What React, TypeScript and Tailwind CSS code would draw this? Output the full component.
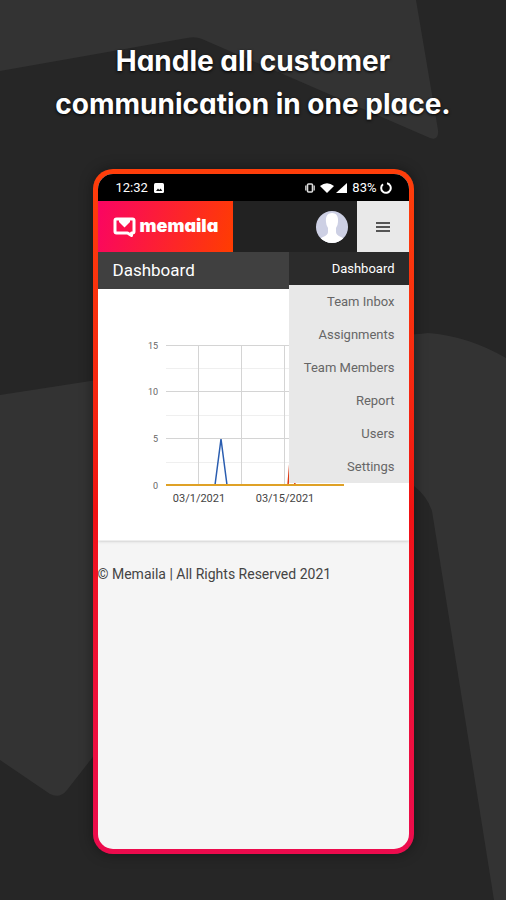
import React from "react";

const menuItems = ["Dashboard", "Team Inbox", "Assignments", "Team Members", "Report", "Users", "Settings"];

function Backdrop() {
  return (
    <svg
      className="absolute inset-0 h-full w-full"
      viewBox="0 0 506 900"
      preserveAspectRatio="xMidYMid slice"
      aria-hidden="true"
    >
      <g fill="#333333">
        <path d="M0 0H416L438 130Q439 141 430 138L202 39Q195 36 187 38L0 71Z" />
        <path d="M0 395L110 378L250 352Q380 338 428 333Q468 336 506 358V900H494L432 511Q427 496 414 486L280 590L110 735L67 790Q60 799 50 794L0 760Z" />
      </g>
    </svg>
  );
}

function StatusBar() {
  return (
    <div className="flex h-[27px] items-center justify-between bg-black pr-[17px] pl-[18px] text-[13px] text-white">
      <div className="flex items-center gap-[6px]">
        <span>12:32</span>
        <svg width="10" height="10" viewBox="0 0 10 10" aria-hidden="true">
          <rect width="10" height="10" rx="1.5" fill="#fff" />
          <path d="M2 8L4 5.600L5.300 7L6.600 5.400L8.300 8Z" fill="#111" />
        </svg>
      </div>
      <div className="flex items-center gap-[2px]">
        <svg className="mr-[3px]" width="10" height="10" viewBox="0 0 10 10" aria-hidden="true">
          <rect x="2.500" y="1" width="5" height="8" rx="1" fill="none" stroke="#ddd" strokeWidth="1.600" />
          <path d="M.8 2.500V7.500M9.200 2.500V7.500" stroke="#ccc" strokeWidth="1.400" />
        </svg>
        <svg width="14" height="10" viewBox="0 0 14 10" aria-hidden="true">
          <path d="M0 3Q7-2.500 14 3L7 10Z" fill="#fff" />
        </svg>
        <svg width="11" height="10" viewBox="0 0 11 10" aria-hidden="true">
          <path d="M11 0V10H0Z" fill="#fff" />
        </svg>
        <span className="ml-[3px]">83%</span>
        <svg className="ml-[1px]" width="12" height="12" viewBox="0 0 12 12" aria-hidden="true">
          <path d="M7 1.300A4.800 4.800 0 1 1 3 2.200" fill="none" stroke="#fff" strokeWidth="2" />
        </svg>
      </div>
    </div>
  );
}

function Logo() {
  return (
    <a
      href="#home"
      className="flex w-[135px] items-center gap-[4px] bg-linear-[105deg,#fa0463,#ff3d00] pb-[3px] pl-[15px] text-white"
    >
      <svg className="mt-[3px]" width="23" height="20" viewBox="0 0 23 20" aria-hidden="true">
        <path
          d="M3.500 2H19.500Q21 2 21 3.500V14.500Q21 16 19.500 16H18.500V18.500L14.500 16H3.500Q2 16 2 14.500V3.500Q2 2 3.500 2Z"
          fill="none"
          stroke="#fff"
          strokeWidth="3"
          strokeLinejoin="round"
        />
        <path d="M6 2H17V5L11.500 10.500L6 5Z" fill="#fff" />
      </svg>
      <span className="font-[Inter,sans-serif] text-[18px] font-black [font-feature-settings:'cv11']">memaila</span>
    </a>
  );
}

function Avatar() {
  return (
    <button type="button" aria-label="Account" className="mr-[9px] self-center">
      <svg width="32" height="32" viewBox="0 0 32 32" aria-hidden="true">
        <clipPath id="disc">
          <circle cx="16" cy="16" r="16" />
        </clipPath>
        <g clipPath="url(#disc)">
          <rect width="32" height="32" fill="#cdd0e4" />
          <path
            d="M16 2C11 2 9.500 6 10 11Q10 14 12 17V21Q12 24 7 26Q4 27 3 32H29Q28 27 25 26Q20 24 20 21V17Q22 14 22 11C22.500 6 21 2 16 2Z"
            fill="#fff"
          />
        </g>
      </svg>
    </button>
  );
}

function Chart() {
  return (
    <svg width="246" height="251" viewBox="0 0 246 251" role="img" aria-label="Activity per day">
      <g shapeRendering="crispEdges">
        {[79, 126, 173].map((y) => (
          <rect key={y} x="68" y={y} width="178" height="1" fill="#efefef" />
        ))}
        {[56, 102, 149].map((y) => (
          <rect key={y} x="68" y={y} width="178" height="1" fill="#d4d4d4" />
        ))}
        {[100, 143, 186].map((x) => (
          <rect key={x} x={x} y="56" width="1" height="140" fill="#d4d4d4" />
        ))}
      </g>
      <path d="M117 196L123 150L129 196" fill="none" stroke="#2a5db0" strokeWidth="1.500" />
      <path d="M190 196L193 160L197 196" fill="none" stroke="#dc3912" strokeWidth="1.500" />
      <path d="M68 196H246" stroke="#dfa126" strokeWidth="2" />
      <g fontSize="9" fill="#666" textAnchor="end">
        <text x="60" y="60">15</text>
        <text x="60" y="106">10</text>
        <text x="60" y="153">5</text>
        <text x="60" y="200">0</text>
      </g>
      <g fontSize="11" fill="#444" textAnchor="middle">
        <text x="101" y="213">03/1/2021</text>
        <text x="187" y="213">03/15/2021</text>
      </g>
    </svg>
  );
}

function SideMenu() {
  return (
    <nav className="absolute top-0 right-0 w-[120px] bg-[#e8e8e8] text-right text-[13px] leading-[33px] text-[#666]">
      {menuItems.map((item, i) => (
        <a
          key={item}
          href={"#" + item.toLowerCase().replace(" ", "-")}
          className={i === 0 ? "block bg-[#2b2b2b] pr-[14px] text-white" : "block pr-[14px]"}
        >
          {item}
        </a>
      ))}
    </nav>
  );
}

export default function App() {
  return (
    <div className="relative min-h-screen overflow-hidden bg-[#262626] font-[Roboto,sans-serif]">
      <Backdrop />
      <main className="relative pt-[40px] pb-[46px]">
        <h1 className="text-center font-[Inter,sans-serif] text-[28px] leading-[43px] font-bold text-white [font-feature-settings:'cv11'] [text-shadow:0_1px_3px_#000]">
          Handle all customer
          <br />
          communication in one place.
        </h1>
        <div className="mx-auto mt-[43px] flex min-h-[685px] w-full max-w-[321px] flex-col rounded-[20px] bg-linear-to-b from-[#ff3e0a] via-[#f01212] to-[#ec0b4d] p-[5px] shadow-[0_0_14px_rgba(0,0,0,0.4)]">
          <div className="flex flex-1 flex-col overflow-hidden rounded-[15px] bg-[#f5f5f5]">
            <StatusBar />
            <header className="flex h-[51px] bg-[#222]">
              <Logo />
              <div className="flex-1" />
              <Avatar />
              <button type="button" aria-label="Menu" className="flex w-[52px] items-center justify-center bg-[#e9e9e9]">
                <svg width="14" height="12" viewBox="0 0 14 12" aria-hidden="true">
                  <path d="M0 2H14M0 6H14M0 10H14" stroke="#555" strokeWidth="2" />
                </svg>
              </button>
            </header>
            <div className="relative">
              <h2 className="bg-[#404040] pl-[15px] text-[17px] leading-[37px] text-white">Dashboard</h2>
              <section className="border-b border-[#eee] bg-white shadow-sm">
                <Chart />
              </section>
              <SideMenu />
            </div>
            <footer className="pt-[23px] text-[14px] leading-[20px] text-[#444]">© Memaila | All Rights Reserved 2021</footer>
          </div>
        </div>
      </main>
    </div>
  );
}
